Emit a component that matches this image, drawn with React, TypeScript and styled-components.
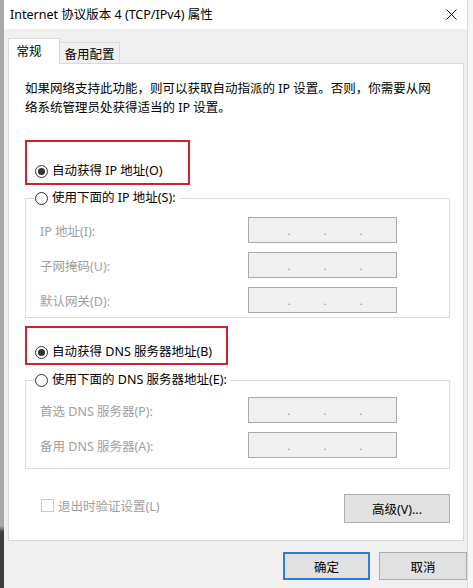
import React from "react";
import styled, { createGlobalStyle } from "styled-components";

const GlobalStyle = createGlobalStyle`
  html, body {
    margin: 0;
    padding: 0;
  }
  body {
    width: 473px;
    height: 588px;
    overflow: hidden;
    font-family: "Noto Sans", "Noto Sans CJK SC", sans-serif;
    font-size: 12.5px;
    color: #000;
    background: #f5f5f5;
  }
  * {
    box-sizing: border-box;
  }
`;

const Screen = styled.div`
  display: flex;
  height: 588px;
`;

const LeftEdge = styled.div`
  width: 4px;
  background: linear-gradient(#a9a9a9 0, #a9a9a9 526px, #3d3d3d 532px);
`;

const RightEdge = styled.div`
  width: 6px;
  border-left: 1px solid #dadada;
  background: #f6f6f6;
`;

const Window = styled.div`
  width: 463px;
  display: flex;
  flex-direction: column;
  background: #f0f0f0;
`;

const TitleBar = styled.div`
  height: 29px;
  display: flex;
  align-items: center;
  justify-content: space-between;
  padding: 0 10px 0 6px;
  background: #fff;
`;

const Title = styled.span`
  font-size: 12.5px;
  line-height: 16px;
`;

const TabStrip = styled.div`
  display: flex;
  align-items: flex-end;
  height: 25px;
  margin: 9px 0 0 4px;
`;

const Tab = styled.div<{ $active?: boolean }>`
  position: relative;
  display: flex;
  align-items: center;
  justify-content: center;
  height: ${(p) => (p.$active ? "26px" : "21px")};
  width: ${(p) => (p.$active ? "52px" : "60px")};
  padding: ${(p) => (p.$active ? "0 10px 2px 0" : "0")};
  margin-bottom: ${(p) => (p.$active ? "-1px" : "0")};
  border: 1px solid #d9d9d9;
  border-bottom: none;
  border-left: ${(p) => (p.$active ? "1px solid #d9d9d9" : "none")};
  background: ${(p) => (p.$active ? "#fff" : "#f0f0f0")};
  z-index: ${(p) => (p.$active ? 1 : 0)};
`;

const Panel = styled.div`
  width: 456px;
  margin-left: 4px;
  display: flex;
  flex-direction: column;
  padding: 15px 13px 17px 16px;
  background: #fff;
  border: 1px solid #d9d9d9;
`;

const Description = styled.p`
  margin: 0;
  line-height: 19px;

  span {
    display: block;
    white-space: nowrap;
  }
`;

const Highlight = styled.div<{ $width: number; $height: number; $gap: number; $pad: number }>`
  display: flex;
  align-items: flex-end;
  width: ${(p) => p.$width}px;
  height: ${(p) => p.$height}px;
  margin-top: ${(p) => p.$gap}px;
  padding: 0 0 ${(p) => p.$pad}px 8px;
  border: 2px solid #d4202c;
`;

const RadioRow = styled.label`
  display: flex;
  align-items: center;
  height: 16px;
  line-height: 16px;
  white-space: nowrap;
`;

const RadioDot = styled.span<{ $checked?: boolean }>`
  display: flex;
  align-items: center;
  justify-content: center;
  width: 13px;
  height: 13px;
  margin-right: 4px;
  border: 1px solid #333;
  border-radius: 50%;
  background: #fff;

  &::after {
    content: "";
    display: ${(p) => (p.$checked ? "block" : "none")};
    width: 7px;
    height: 7px;
    border-radius: 50%;
    background: #333;
  }
`;

const Group = styled.fieldset<{ $gap: number; $top: number; $bottom: number }>`
  margin: ${(p) => p.$gap}px 0 0 0;
  padding: ${(p) => p.$top}px 0 ${(p) => p.$bottom}px 14px;
  border: 1px solid #dcdcdc;
  min-width: 0;
`;

const Legend = styled.legend`
  padding: 0 3px 0 0;
  margin-left: -5px;
  height: 16px;
`;

const Fields = styled.div`
  display: grid;
  grid-template-columns: 208px 149px;
  grid-auto-rows: 26px;
  row-gap: 9px;
  align-items: center;
`;

const FieldLabel = styled.span`
  color: #a0a0a0;
  white-space: nowrap;
`;

const AddressBox = styled.div`
  display: flex;
  height: 26px;
  padding-left: 22px;
  background: #f0f0f0;
  border: 1px solid #aaaaaa;
`;

const AddressDot = styled.span`
  width: 36px;
  text-align: center;
  line-height: 26px;
  font-size: 11px;
  color: #8c8c8c;
`;

const Footer = styled.div`
  display: flex;
  justify-content: space-between;
  align-items: flex-start;
  margin-top: 25px;
`;

const CheckRow = styled.label`
  display: flex;
  align-items: center;
  height: 16px;
  margin: 3px 0 0 16px;
  color: #a0a0a0;
`;

const CheckBox = styled.span`
  width: 13px;
  height: 13px;
  margin-right: 4px;
  border: 1px solid #c8c8c8;
  background: #fff;
`;

const Button = styled.button<{ $width: number; $height: number; $primary?: boolean }>`
  width: ${(p) => p.$width}px;
  height: ${(p) => p.$height}px;
  padding: 0;
  font-family: inherit;
  font-size: 12.5px;
  color: #000;
  background: #e1e1e1;
  border: ${(p) => (p.$primary ? "2px solid #2a7fd4" : "1px solid #adadad")};
  border-radius: 0;
`;

const DialogButtons = styled.div`
  display: flex;
  justify-content: flex-end;
  gap: 9px;
  margin-top: 11px;
`;

const CloseIcon = () => (
  <svg width="11" height="11" viewBox="0 0 11 11">
    <path d="M0.5 0.5 L10.5 10.5 M10.5 0.5 L0.5 10.5" stroke="#111" strokeWidth="1" />
  </svg>
);

const Address = () => (
  <AddressBox>
    <AddressDot>.</AddressDot>
    <AddressDot>.</AddressDot>
    <AddressDot>.</AddressDot>
  </AddressBox>
);

const ipRows = ["IP 地址(I):", "子网掩码(U):", "默认网关(D):"];
const dnsRows = ["首选 DNS 服务器(P):", "备用 DNS 服务器(A):"];

const App = () => (
  <>
    <GlobalStyle />
    <Screen>
      <LeftEdge />
      <Window>
        <TitleBar>
          <Title>Internet 协议版本 4 (TCP/IPv4) 属性</Title>
          <CloseIcon />
        </TitleBar>

        <TabStrip>
          <Tab $active>常规</Tab>
          <Tab>备用配置</Tab>
        </TabStrip>

        <Panel>
          <Description>
            <span>如果网络支持此功能，则可以获取自动指派的 IP 设置。否则，你需要从网</span>
            <span>络系统管理员处获得适当的 IP 设置。</span>
          </Description>

          <Highlight $width={165} $height={45} $gap={23} $pad={4}>
            <RadioRow>
              <RadioDot $checked />
              自动获得 IP 地址(O)
            </RadioRow>
          </Highlight>

          <Group $gap={5} $top={11} $bottom={4}>
            <Legend>
              <RadioRow>
                <RadioDot />
                使用下面的 IP 地址(S):
              </RadioRow>
            </Legend>
            <Fields>
              {ipRows.map((label) => (
                <React.Fragment key={label}>
                  <FieldLabel>{label}</FieldLabel>
                  <Address />
                </React.Fragment>
              ))}
            </Fields>
          </Group>

          <Highlight $width={203} $height={39} $gap={8} $pad={3}>
            <RadioRow>
              <RadioDot $checked />
              自动获得 DNS 服务器地址(B)
            </RadioRow>
          </Highlight>

          <Group $gap={7} $top={9} $bottom={10}>
            <Legend>
              <RadioRow>
                <RadioDot />
                使用下面的 DNS 服务器地址(E):
              </RadioRow>
            </Legend>
            <Fields>
              {dnsRows.map((label) => (
                <React.Fragment key={label}>
                  <FieldLabel>{label}</FieldLabel>
                  <Address />
                </React.Fragment>
              ))}
            </Fields>
          </Group>

          <Footer>
            <CheckRow>
              <CheckBox />
              退出时验证设置(L)
            </CheckRow>
            <Button $width={106} $height={29}>高级(V)...</Button>
          </Footer>
        </Panel>

        <DialogButtons>
          <Button $width={87} $height={28} $primary>确定</Button>
          <Button $width={88} $height={28}>取消</Button>
        </DialogButtons>
      </Window>
      <RightEdge />
    </Screen>
  </>
);

export default App;
